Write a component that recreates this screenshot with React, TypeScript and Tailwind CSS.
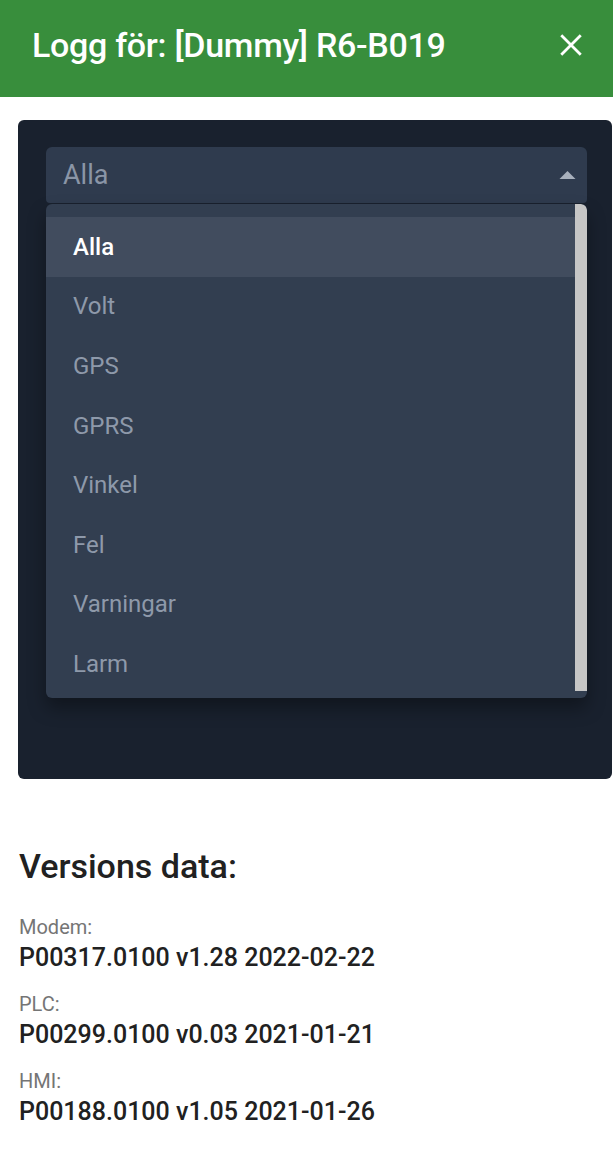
import { useState } from "react";

const options = ["Alla", "Volt", "GPS", "GPRS", "Vinkel", "Fel", "Varningar", "Larm"];

const versions = [
  { label: "Modem:", value: "P00317.0100 v1.28 2022-02-22" },
  { label: "PLC:", value: "P00299.0100 v0.03 2021-01-21" },
  { label: "HMI:", value: "P00188.0100 v1.05 2021-01-26" },
];

const App = () => {
  const [selected, setSelected] = useState<string>("Alla");

  return (
    <div className="w-[613px] min-h-[1152px] bg-white font-['Roboto',sans-serif]">
      <header className="flex h-[97px] items-center justify-between bg-[#388e3c] pb-[7px] pl-8 pr-[26px]">
        <h1 className="text-[34px] font-medium leading-none tracking-[-0.3px] text-white">
          Logg för: [Dummy] R6-B019
        </h1>
        <button className="flex h-8 w-8 items-center justify-center">
          <svg viewBox="0 0 24 24" className="h-[28px] w-[28px]" fill="none" stroke="white" strokeWidth="2.4" strokeLinecap="square">
            <path d="M4.5 4.5l15 15M19.5 4.5l-15 15" />
          </svg>
        </button>
      </header>

      <div className="pl-[18px] pr-[1px] pt-[23px]">
        <div className="relative h-[659px] rounded-md bg-[#19212e] pl-[28px] pr-[25px] pt-[27px]">
          <div className="flex h-[56px] items-center justify-between rounded-t-md rounded-b-sm bg-[#2f3b4e] pl-[17px] pr-[11px]">
            <span className="text-[27px] text-[#8a95a6]">{selected}</span>
            <svg viewBox="0 0 20 10" className="h-[8px] w-[17px]">
              <path d="M0 10L10 0L20 10Z" fill="#a8b0bc" />
            </svg>
          </div>

          <div className="absolute left-[28px] right-[25px] top-[84px] flex h-[494px] overflow-hidden rounded-md bg-[#323e50] shadow-[0_10px_18px_rgba(0,0,0,0.35)]">
            <ul className="flex-1 pt-[13px]">
              {options.map((opt) => (
                <li
                  key={opt}
                  onClick={() => setSelected(opt)}
                  className={`flex h-[59.6px] items-center pl-[27px] text-[24px] ${
                    opt === selected ? "bg-[#414c5e] font-medium text-white" : "text-[#8e99aa]"
                  }`}
                >
                  {opt}
                </li>
              ))}
            </ul>
            <div className="flex w-[12px] flex-col">
              <div className="h-[487px] rounded-tr-md bg-[#c6c6c6]" />
            </div>
          </div>
        </div>
      </div>

      <section className="px-[19px] pt-[70px]">
        <h2 className="text-[34px] font-medium leading-none text-[#212121]">Versions data:</h2>
        <div className="mt-[32px] flex flex-col gap-[19px]">
          {versions.map((v) => (
            <div key={v.label} className="flex flex-col">
              <span className="text-[20px] leading-[24px] text-[#757575]">{v.label}</span>
              <span className="mt-[4px] text-[25px] font-medium leading-[30px] text-[#212121]">{v.value}</span>
            </div>
          ))}
        </div>
      </section>
    </div>
  );
};

export default App;
